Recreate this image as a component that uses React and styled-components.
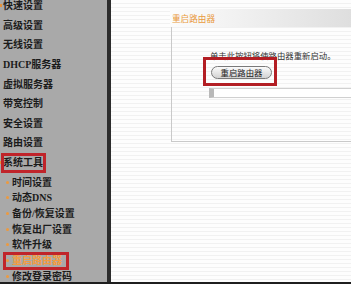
import React from 'react';
import styled, { createGlobalStyle } from 'styled-components';

const GlobalStyle = createGlobalStyle`
    html, body {
        margin: 0;
        padding: 0;
        background: #fff;
    }
    body {
        font-family: "Noto Sans CJK SC", "Noto Sans", sans-serif;
    }
`;

const mainItems = ['快速设置', '高级设置', '无线设置', 'DHCP服务器', '虚拟服务器', '带宽控制', '安全设置', '路由设置'];
const subItems = ['时间设置', '动态DNS', '备份/恢复设置', '恢复出厂设置', '软件升级', '重启路由器', '修改登录密码'];

const App = () => {
    return (
        <React.Fragment>
            <GlobalStyle />
            <Frame>
                <Sidebar>
                    <MenuList>
                        {mainItems.map((label, i) => (
                            <MainItem key={label} dot={i === 0}>{label}</MainItem>
                        ))}
                        <MainItem dot marked>系统工具</MainItem>
                        <SubGroup>
                            {subItems.map((label) => (
                                <SubItem key={label} active={label === '重启路由器'}>{label}</SubItem>
                            ))}
                        </SubGroup>
                    </MenuList>
                </Sidebar>

                <Content>
                    <Panel>
                        <PanelHeader>重启路由器</PanelHeader>
                        <PanelBody>
                            <Hint>单击此按钮将使路由器重新启动。</Hint>
                            <ButtonWrap>
                                <RebootButton>重启路由器</RebootButton>
                            </ButtonWrap>
                            <StatusBox />
                        </PanelBody>
                    </Panel>
                </Content>
            </Frame>
        </React.Fragment>
    );
};

const Frame = styled.div`
    display: flex;
    width: 351px;
    height: 284px;
    box-sizing: border-box;
    border-bottom: 2px solid #1e1e1e;
    overflow: hidden;
`;

const Sidebar = styled.nav`
    flex: none;
    width: 111px;
    box-sizing: border-box;
    background: #a9a9a9;
    border-right: 4px solid #2c2c2c;
    overflow: hidden;
`;

const MenuList = styled.div`
    margin-top: -3.8px;
`;

const itemText = styled.div`
    position: relative;
    font-family: "Liberation Serif", "Noto Sans CJK SC", serif;
    font-weight: bold;
    font-size: 10px;
    white-space: nowrap;
`;

const MainItem = styled(itemText)`
    height: 19.6px;
    line-height: 19.6px;
    padding-left: 3px;
    color: #1b1b1b;

    &::before {
        content: '';
        display: ${(p) => (p.dot ? 'block' : 'none')};
        position: absolute;
        left: 0;
        top: 8px;
        width: 2px;
        height: 3px;
        background: #e8913a;
    }

    &::after {
        content: '';
        display: ${(p) => (p.marked ? 'block' : 'none')};
        position: absolute;
        left: 1px;
        top: 0;
        width: 45px;
        height: 20px;
        box-sizing: border-box;
        border: 3px solid #c0242a;
    }
`;

const SubGroup = styled.div`
    padding-top: 2px;
`;

const SubItem = styled(itemText)`
    height: 15.7px;
    line-height: 15.7px;
    padding-left: 12px;
    color: ${(p) => (p.active ? '#f39c40' : '#1b1b1b')};

    &::before {
        content: '';
        position: absolute;
        left: 6px;
        top: 6px;
        width: 3px;
        height: 3px;
        border-radius: 50%;
        background: #ee9a3e;
    }

    &::after {
        content: '';
        display: ${(p) => (p.active ? 'block' : 'none')};
        position: absolute;
        left: 3px;
        top: -1px;
        width: 66px;
        height: 18px;
        box-sizing: border-box;
        border: 3px solid #c0242a;
    }
`;

const Content = styled.main`
    flex: 1;
    min-width: 0;
    padding: 9px 0 0 59px;
    overflow: hidden;
    background: repeating-linear-gradient(
        to bottom,
        #fdfdfd 0,
        #fdfdfd 3px,
        #f1f1f1 3px,
        #f1f1f1 4px
    );
`;

const Panel = styled.section`
    width: 220px;
`;

const PanelHeader = styled.div`
    height: 18px;
    line-height: 18px;
    padding-left: 2px;
    font-size: 8.6px;
    color: #e99a3d;
    background: linear-gradient(to right, #fcfcfc, #d8d8d8);
`;

const PanelBody = styled.div`
    margin-left: 1px;
    padding: 22px 0 43px 38px;
    border-left: 1px solid #c9c9c9;
    border-bottom: 1px solid #c9c9c9;
`;

const Hint = styled.p`
    margin: 0;
    height: 12px;
    line-height: 12px;
    font-size: 8.4px;
    color: #333;
    white-space: nowrap;
`;

const ButtonWrap = styled.div`
    position: relative;
    display: flex;
    width: fit-content;
    margin: 5px 0 0 1px;

    &::after {
        content: '';
        position: absolute;
        left: -8px;
        top: -9px;
        right: -5px;
        bottom: -7px;
        border: 3px solid #b31e24;
    }
`;

const RebootButton = styled.button`
    width: 61px;
    height: 13px;
    padding: 0;
    box-sizing: border-box;
    border: 1px solid #7a7a7a;
    border-radius: 7px;
    background: linear-gradient(to bottom, #fbfbfb, #d2d2d2);
    font-family: "Noto Sans CJK SC", sans-serif;
    font-size: 8.4px;
    line-height: 11px;
    color: #222;
`;

const StatusBox = styled.div`
    height: 10px;
    margin: 9px 0 0 -1px;
    box-sizing: border-box;
    border: 1px solid #d0d0d0;
    border-left: 5px solid #b9b9b9;
    background: #fff;
`;

export default App;
